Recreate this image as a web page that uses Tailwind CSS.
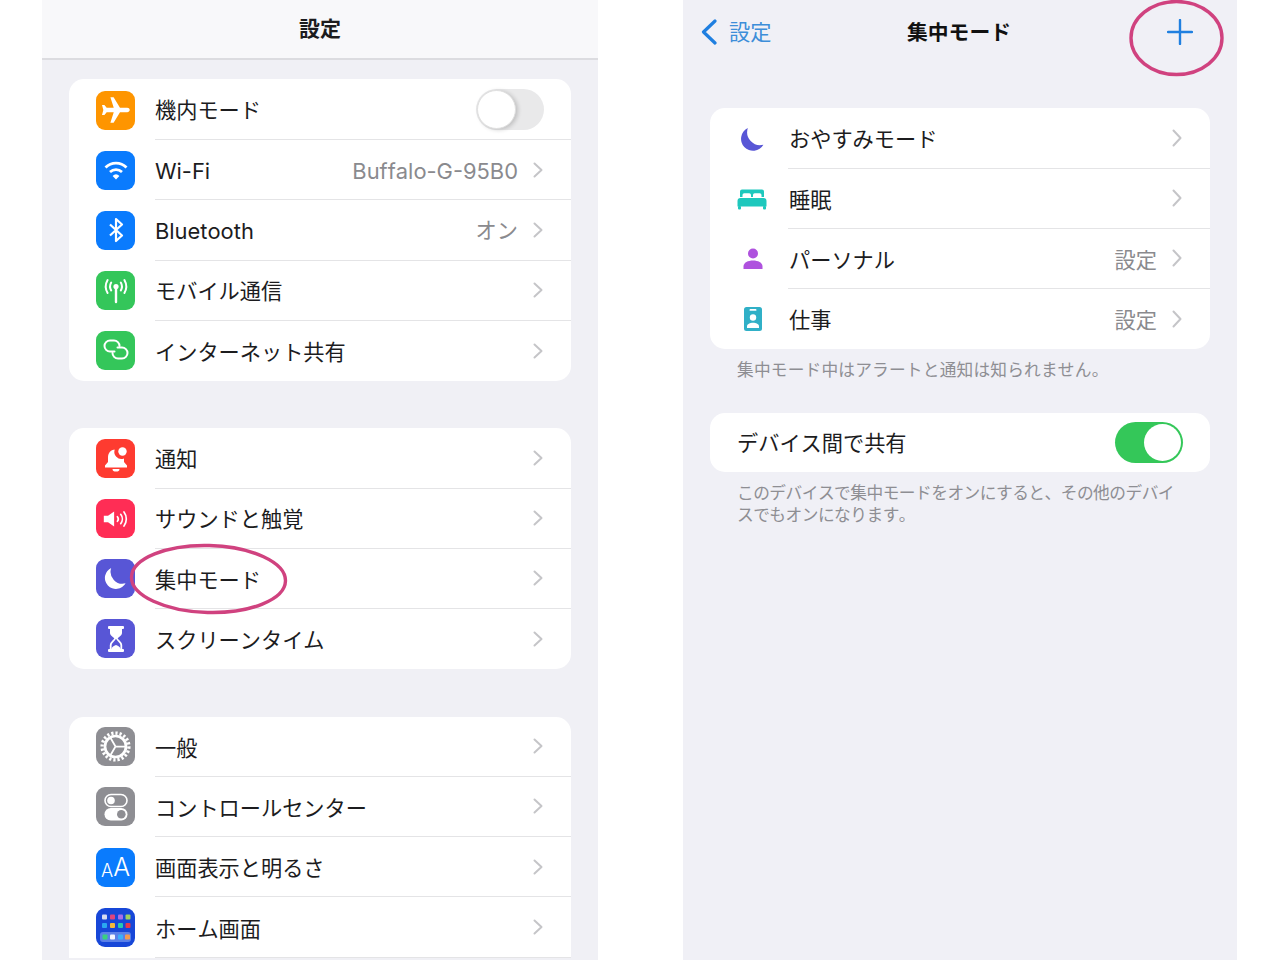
<!DOCTYPE html>
<html lang="ja">
<head>
<meta charset="utf-8">
<title>設定</title>
<script src="https://cdn.jsdelivr.net/npm/@tailwindcss/browser@4"></script>
</head>
<body class="bg-white">
<div class="relative flex w-[1280px] h-[960px] overflow-hidden bg-white text-[21.2px] text-[#1c1c1e] [font-kerning:none] font-[family-name:Inter,'Noto_Sans_CJK_JP',sans-serif]">

  <!-- LEFT PANEL -->
  <section class="ml-[42px] w-[556px] h-full bg-[#f0f0f5] overflow-hidden">
    <header class="flex items-center justify-center h-[60px] bg-[#f8f8fa] border-b-2 border-[#dcdce0] text-[21px] font-bold">設定</header>

    <div class="mx-[27px] mt-[19px] pt-[1px] bg-white rounded-[15px]">
      <div class="flex items-center h-[60.2px] pl-[27px]">
        <div class="flex items-center justify-center w-[39px] h-[39px] rounded-[9px] bg-[#fe9500] shrink-0">
          <svg viewBox="0 0 24 24" class="w-[32px] h-[32px] rotate-90" fill="#fff"><path d="M21.5 16.2v-2.4L13.6 9V3.6c0-.95-.7-1.9-1.6-1.9s-1.6.95-1.6 1.9V9l-7.9 4.8v2.4l7.9-2.5V19l-2.2 1.7v1.8l3.8-1 3.8 1v-1.8L13.6 19v-5.3z"/></svg>
        </div>
        <div class="flex items-center flex-1 h-full ml-[20px] pr-[27px] border-b border-[#e4e4e6]">
          <span class="flex-1 pt-[2px]">機内モード</span>
          <div class="flex justify-start w-[68px] h-[41px] rounded-full bg-[#e9e9ea] p-[1px]"><div class="w-[39px] h-[39px] rounded-full bg-white border border-[#e0e0e0] shadow-[2px_1px_4px_rgba(0,0,0,0.18)]"></div></div>
        </div>
      </div>
      <div class="flex items-center h-[60.2px] pl-[27px]">
        <div class="flex items-center justify-center w-[39px] h-[39px] rounded-[9px] bg-[#0a7bfd] shrink-0">
          <svg viewBox="0 0 28 28" class="w-[28px] h-[28px]" fill="none" stroke="#fff" stroke-width="2.8"><path d="M3.5 11.5a15 15 0 0 1 21 0"/><path d="M8 16a9 9 0 0 1 12 0"/><path d="M14 23.5l-3.4-3.6a5 5 0 0 1 6.8 0z" fill="#fff" stroke="none"/></svg>
        </div>
        <div class="flex items-center flex-1 h-full ml-[20px] pr-[28px] border-b border-[#e4e4e6]">
          <span class="flex-1 pt-[4px] text-[21.9px]">Wi-Fi</span>
          <span class="text-[#8a8a8e] mr-[15px] pt-[4px] text-[21.9px]">Buffalo-G-95B0</span>
          <svg viewBox="0 0 10 16" class="w-[10px] h-[16px]" fill="none" stroke="#c5c5c8" stroke-width="2" stroke-linecap="round" stroke-linejoin="round"><path d="M1.5 1.5L8.5 8l-7 6.5"/></svg>
        </div>
      </div>
      <div class="flex items-center h-[60.2px] pl-[27px]">
        <div class="flex items-center justify-center w-[39px] h-[39px] rounded-[9px] bg-[#0a7bfd] shrink-0">
          <svg viewBox="0 0 24 30" class="w-[24px] h-[30px]" fill="none" stroke="#fff" stroke-width="2.2" stroke-linejoin="round"><path d="M6 9.5l12 11-6 5.5V4l6 5.5-12 11"/></svg>
        </div>
        <div class="flex items-center flex-1 h-full ml-[20px] pr-[28px] border-b border-[#e4e4e6]">
          <span class="flex-1 pt-[2px] text-[21.9px]">Bluetooth</span>
          <span class="text-[#8a8a8e] mr-[15px] pt-[2px]">オン</span>
          <svg viewBox="0 0 10 16" class="w-[10px] h-[16px]" fill="none" stroke="#c5c5c8" stroke-width="2" stroke-linecap="round" stroke-linejoin="round"><path d="M1.5 1.5L8.5 8l-7 6.5"/></svg>
        </div>
      </div>
      <div class="flex items-center h-[60.2px] pl-[27px]">
        <div class="flex items-center justify-center w-[39px] h-[39px] rounded-[9px] bg-[#34c65a] shrink-0">
          <svg viewBox="0 0 32 32" class="w-[32px] h-[32px]" fill="none" stroke="#fff" stroke-width="2" stroke-linecap="round"><circle cx="16" cy="11.5" r="2.6" fill="#fff" stroke="none"/><path d="M16 13v14" stroke-width="2.4"/><path d="M11.2 7.5a8 8 0 0 0 0 8"/><path d="M20.8 7.5a8 8 0 0 1 0 8"/><path d="M7.6 5a13 13 0 0 0 0 13"/><path d="M24.4 5a13 13 0 0 1 0 13"/></svg>
        </div>
        <div class="flex items-center flex-1 h-full ml-[20px] pr-[28px] border-b border-[#e4e4e6]">
          <span class="flex-1 pt-[4px]">モバイル通信</span>
          <svg viewBox="0 0 10 16" class="w-[10px] h-[16px]" fill="none" stroke="#c5c5c8" stroke-width="2" stroke-linecap="round" stroke-linejoin="round"><path d="M1.5 1.5L8.5 8l-7 6.5"/></svg>
        </div>
      </div>
      <div class="flex items-center h-[60.2px] pl-[27px]">
        <div class="flex items-center justify-center w-[39px] h-[39px] rounded-[9px] bg-[#34c65a] shrink-0">
          <svg viewBox="0 0 28 28" class="w-[28px] h-[28px]" fill="none" stroke="#fff" stroke-width="2" stroke-linecap="round"><path d="M12.5 14.5H8a5.500 5.500 0 0 1 0-11h4a5.500 5.500 0 0 1 5.500 5.500"/><path d="M15.500 10.500H20a5.500 5.500 0 0 1 0 11h-4a5.500 5.500 0 0 1-5.500-5.500"/></svg>
        </div>
        <div class="flex items-center flex-1 h-full ml-[20px] pr-[28px]">
          <span class="flex-1 pt-[4px]">インターネット共有</span>
          <svg viewBox="0 0 10 16" class="w-[10px] h-[16px]" fill="none" stroke="#c5c5c8" stroke-width="2" stroke-linecap="round" stroke-linejoin="round"><path d="M1.5 1.5L8.5 8l-7 6.5"/></svg>
        </div>
      </div>
    </div>

    <div class="mx-[27px] mt-[47px] pt-[1px] bg-white rounded-[15px]">
      <div class="flex items-center h-[60px] pl-[27px]">
        <div class="flex items-center justify-center w-[39px] h-[39px] rounded-[9px] bg-[#fe3b30] shrink-0">
          <svg viewBox="0 0 32 32" class="w-[32px] h-[32px]" fill="#fff"><path d="M15 6.5c-4.600.4-7 3.800-7 8v4.500L5 22.600V24.500h22v-1.900l-3-3.600v-3.600a7 7 0 0 1-9-9.400z"/><path d="M12.500 26h7a3.500 2.600 0 0 1-7 0z"/><circle cx="22.500" cy="8.500" r="4.200"/></svg>
        </div>
        <div class="flex items-center flex-1 h-full ml-[20px] pr-[28px] border-b border-[#e4e4e6]">
          <span class="flex-1 pt-[2px]">通知</span>
          <svg viewBox="0 0 10 16" class="w-[10px] h-[16px]" fill="none" stroke="#c5c5c8" stroke-width="2" stroke-linecap="round" stroke-linejoin="round"><path d="M1.5 1.5L8.5 8l-7 6.5"/></svg>
        </div>
      </div>
      <div class="flex items-center h-[60px] pl-[27px]">
        <div class="flex items-center justify-center w-[39px] h-[39px] rounded-[9px] bg-[#ff2d55] shrink-0">
          <svg viewBox="0 0 32 32" class="w-[30px] h-[30px]" fill="none" stroke="#fff" stroke-width="1.8" stroke-linecap="round"><path d="M3 12.500h4.500L14 8v16l-6.500-4.500H3z" fill="#fff" stroke="none"/><path d="M17.500 13.500a4 4 0 0 1 0 5"/><path d="M21 11a8 8 0 0 1 0 10"/><path d="M24.500 8.500a12.500 12.500 0 0 1 0 15"/></svg>
        </div>
        <div class="flex items-center flex-1 h-full ml-[20px] pr-[28px] border-b border-[#e4e4e6]">
          <span class="flex-1 pt-[2px]">サウンドと触覚</span>
          <svg viewBox="0 0 10 16" class="w-[10px] h-[16px]" fill="none" stroke="#c5c5c8" stroke-width="2" stroke-linecap="round" stroke-linejoin="round"><path d="M1.5 1.5L8.5 8l-7 6.5"/></svg>
        </div>
      </div>
      <div class="flex items-center h-[60px] pl-[27px]">
        <div class="flex items-center justify-center w-[39px] h-[39px] rounded-[9px] bg-[#5856d6] shrink-0">
          <svg viewBox="0 0 26 26" class="w-[25px] h-[25px]" fill="#fff"><path d="M8.500 2A11.500 11.500 0 1 0 23.500 18A12.500 12.500 0 0 1 8.500 2z"/></svg>
        </div>
        <div class="flex items-center flex-1 h-full ml-[20px] pr-[28px] border-b border-[#e4e4e6]">
          <span class="flex-1 pt-[4px]">集中モード</span>
          <svg viewBox="0 0 10 16" class="w-[10px] h-[16px]" fill="none" stroke="#c5c5c8" stroke-width="2" stroke-linecap="round" stroke-linejoin="round"><path d="M1.5 1.5L8.5 8l-7 6.5"/></svg>
        </div>
      </div>
      <div class="flex items-center h-[60px] pl-[27px]">
        <div class="flex items-center justify-center w-[39px] h-[39px] rounded-[9px] bg-[#5856d6] shrink-0">
          <svg viewBox="0 0 20 28" class="w-[20px] h-[28px]" fill="#fff"><rect x="2" y="1" width="16" height="3" rx="1"/><rect x="2" y="24" width="16" height="3" rx="1"/><path d="M4 3.500h12v4.500c0 2.800-4.500 4.500-4.500 6h-3c0-1.500-4.500-3.200-4.500-6z"/><path d="M9 13.500c0 1.800-4.300 3.500-4.300 6.500v4.500M11 13.500c0 1.800 4.300 3.500 4.300 6.500v4.500" fill="none" stroke="#fff" stroke-width="1.800"/><path d="M5 24.500c1-3 3.800-4 5-4.500 1.200.5 4 1.500 5 4.500z"/></svg>
        </div>
        <div class="flex items-center flex-1 h-full ml-[20px] pr-[28px]">
          <span class="flex-1 pt-[4px]">スクリーンタイム</span>
          <svg viewBox="0 0 10 16" class="w-[10px] h-[16px]" fill="none" stroke="#c5c5c8" stroke-width="2" stroke-linecap="round" stroke-linejoin="round"><path d="M1.5 1.5L8.5 8l-7 6.5"/></svg>
        </div>
      </div>
    </div>

    <div class="mx-[27px] mt-[48px] bg-white rounded-t-[15px]">
      <div class="flex items-center h-[59.8px] pl-[27px]">
        <div class="flex items-center justify-center w-[39px] h-[39px] rounded-[9px] bg-[#8e8e93] shrink-0">
          <svg viewBox="0 0 36 36" class="w-[35px] h-[35px]" fill="none" stroke="#fff"><circle cx="18" cy="18" r="13.800" stroke-width="3.400" stroke-dasharray="2.300 2"/><circle cx="18" cy="18" r="10.800" stroke-width="2.800"/><path d="M18 18H29M18 18l-5.500-9.500M18 18l-5.500 9.500" stroke-width="1.800"/></svg>
        </div>
        <div class="flex items-center flex-1 h-full ml-[20px] pr-[28px] border-b border-[#e4e4e6]">
          <span class="flex-1 pt-[5px]">一般</span>
          <svg viewBox="0 0 10 16" class="w-[10px] h-[16px]" fill="none" stroke="#c5c5c8" stroke-width="2" stroke-linecap="round" stroke-linejoin="round"><path d="M1.5 1.5L8.5 8l-7 6.5"/></svg>
        </div>
      </div>
      <div class="flex items-center h-[60.3px] pl-[27px]">
        <div class="flex items-center justify-center w-[39px] h-[39px] rounded-[9px] bg-[#8e8e93] shrink-0">
          <svg viewBox="0 0 32 32" class="w-[32px] h-[32px]"><rect x="5" y="3.500" width="22" height="12" rx="6" fill="none" stroke="#fff" stroke-width="1.600"/><circle cx="11" cy="9.500" r="3.800" fill="#fff"/><rect x="4.500" y="17" width="23" height="12.500" rx="6.250" fill="#fff"/><circle cx="21.300" cy="23.200" r="4.300" fill="#8e8e93"/></svg>
        </div>
        <div class="flex items-center flex-1 h-full ml-[20px] pr-[28px] border-b border-[#e4e4e6]">
          <span class="flex-1 pt-[6px]">コントロールセンター</span>
          <svg viewBox="0 0 10 16" class="w-[10px] h-[16px]" fill="none" stroke="#c5c5c8" stroke-width="2" stroke-linecap="round" stroke-linejoin="round"><path d="M1.5 1.5L8.5 8l-7 6.5"/></svg>
        </div>
      </div>
      <div class="flex items-center h-[60.3px] pl-[27px]">
        <div class="flex items-end justify-center w-[39px] h-[39px] pb-[7px] rounded-[9px] bg-[#0a7bfd] shrink-0 text-white leading-none font-light">
          <span class="text-[18px]">A</span><span class="text-[25px]">A</span>
        </div>
        <div class="flex items-center flex-1 h-full ml-[20px] pr-[28px] border-b border-[#e4e4e6]">
          <span class="flex-1 pt-[4px]">画面表示と明るさ</span>
          <svg viewBox="0 0 10 16" class="w-[10px] h-[16px]" fill="none" stroke="#c5c5c8" stroke-width="2" stroke-linecap="round" stroke-linejoin="round"><path d="M1.5 1.5L8.5 8l-7 6.5"/></svg>
        </div>
      </div>
      <div class="flex items-center h-[60.3px] pl-[27px]">
        <div class="flex items-center justify-center w-[39px] h-[39px] rounded-[9px] bg-[#1747d8] shrink-0">
          <svg viewBox="0 0 39 39" class="w-[39px] h-[39px]"><rect x="6" y="6.500" width="5" height="5" rx="1" fill="#d8dcf0"/><rect x="14" y="6.500" width="5" height="5" rx="1" fill="#e0447e"/><rect x="22" y="6.500" width="5" height="5" rx="1" fill="#a86ee8"/><rect x="29.500" y="6.500" width="5" height="5" rx="1" fill="#9fd060"/><rect x="6" y="15" width="5" height="5" rx="1" fill="#2aa8f0"/><rect x="14" y="15" width="5" height="5" rx="1" fill="#f4b93c"/><rect x="22" y="15" width="5" height="5" rx="1" fill="#28c8b0"/><rect x="29.500" y="15" width="5" height="5" rx="1" fill="#e8384c"/><rect x="4" y="24" width="31" height="10" rx="3" fill="#5a80e8"/><rect x="6.500" y="26.500" width="5" height="5" rx="1" fill="#38d080"/><rect x="14" y="26.500" width="5" height="5" rx="1" fill="#f4f6ff"/><rect x="22" y="26.500" width="5" height="5" rx="1" fill="#3cb0f8"/><rect x="29" y="26.500" width="5" height="5" rx="1" fill="#f49a50"/></svg>
        </div>
        <div class="flex items-center flex-1 h-full ml-[20px] pr-[28px] border-b border-[#e4e4e6]">
          <span class="flex-1 pt-[6px]">ホーム画面</span>
          <svg viewBox="0 0 10 16" class="w-[10px] h-[16px]" fill="none" stroke="#c5c5c8" stroke-width="2" stroke-linecap="round" stroke-linejoin="round"><path d="M1.5 1.5L8.5 8l-7 6.5"/></svg>
        </div>
      </div>
    </div>
  </section>

  <!-- RIGHT PANEL -->
  <section class="ml-[85px] w-[554px] h-full bg-[#f0f0f6] overflow-hidden">
    <header class="grid grid-cols-[1fr_auto_1fr] items-center h-[64px] pl-[18px] pr-[20px]">
      <div class="flex items-center text-[#3d8ed9]">
        <svg viewBox="0 0 16 26" class="w-[16px] h-[26px]" fill="none" stroke="#1f7fe0" stroke-width="3.2" stroke-linecap="round" stroke-linejoin="round"><path d="M14 2L2.500 13 14 24"/></svg>
        <span class="ml-[12px] pt-[1px]">設定</span>
      </div>
      <div class="font-bold text-[20.8px] text-[#111] pt-[2px]">集中モード</div>
      <div class="flex justify-end pr-[24px]">
        <svg viewBox="0 0 26 26" class="w-[26px] h-[26px]" fill="none" stroke="#1f7fe0" stroke-width="2.400" stroke-linecap="round"><path d="M13 1v24M1 13h24"/></svg>
      </div>
    </header>

    <div class="mx-[27px] mt-[44px] pt-[1px] bg-white rounded-[15px]">
      <div class="flex items-center h-[60px] pl-[21px]">
        <div class="flex items-center justify-center w-[42px] h-[42px] shrink-0">
          <svg viewBox="0 0 26 26" class="w-[27px] h-[27px]" fill="#5856d6"><path d="M8.500 2A11.500 11.500 0 1 0 23.500 18A12.500 12.500 0 0 1 8.500 2z"/></svg>
        </div>
        <div class="flex items-center flex-1 h-full ml-[15px] pr-[28px] border-b border-[#e4e4e6]">
          <span class="flex-1 pl-[1px] pt-[2px]">おやすみモード</span>
          <svg viewBox="0 0 10 18" class="w-[10px] h-[18px] mb-[1px]" fill="none" stroke="#c5c5c8" stroke-width="2" stroke-linecap="round" stroke-linejoin="round"><path d="M1.500 1.500L8.500 9l-7 7.500"/></svg>
        </div>
      </div>
      <div class="flex items-center h-[60px] pl-[21px]">
        <div class="flex items-center justify-center w-[42px] h-[42px] shrink-0">
          <svg viewBox="0 0 30 22" class="w-[30px] h-[22px]" fill="#1ec8bd"><path d="M3 9V3.500A2 2 0 0 1 5 1.500h20a2 2 0 0 1 2 2V9h-2.500V7a1.800 1.800 0 0 0-1.800-1.800h-5A1.800 1.800 0 0 0 16 7v2h-2V7a1.800 1.800 0 0 0-1.800-1.800h-5A1.800 1.800 0 0 0 5.500 7v2z"/><path d="M3.500 10h23a3 3 0 0 1 3 3v5.500h-29V13a3 3 0 0 1 3-3z"/><rect x="1" y="18" width="3" height="3.500" rx="1"/><rect x="26" y="18" width="3" height="3.500" rx="1"/></svg>
        </div>
        <div class="flex items-center flex-1 h-full ml-[15px] pr-[28px] border-b border-[#e4e4e6]">
          <span class="flex-1 pl-[1px] pt-[4px]">睡眠</span>
          <svg viewBox="0 0 10 18" class="w-[10px] h-[18px] mb-[1px]" fill="none" stroke="#c5c5c8" stroke-width="2" stroke-linecap="round" stroke-linejoin="round"><path d="M1.500 1.500L8.500 9l-7 7.500"/></svg>
        </div>
      </div>
      <div class="flex items-center h-[60px] pl-[22px]">
        <div class="flex items-center justify-center w-[42px] h-[42px] shrink-0">
          <svg viewBox="0 0 20 22" class="w-[20px] h-[22px]" fill="#af52de"><circle cx="10" cy="5.500" r="5"/><path d="M0.500 21v-2.500C.5 14.500 5 12.500 10 12.500s9.500 2 9.500 6V21z"/></svg>
        </div>
        <div class="flex items-center flex-1 h-full ml-[14px] pr-[28px] border-b border-[#e4e4e6]">
          <span class="flex-1 pl-[1px] pt-[4px]">パーソナル</span>
          <span class="text-[#8a8a8e] mr-[15px] pt-[4px]">設定</span>
          <svg viewBox="0 0 10 18" class="w-[10px] h-[18px] mb-[1px]" fill="none" stroke="#c5c5c8" stroke-width="2" stroke-linecap="round" stroke-linejoin="round"><path d="M1.500 1.500L8.500 9l-7 7.500"/></svg>
        </div>
      </div>
      <div class="flex items-center h-[60px] pl-[22px]">
        <div class="flex items-center justify-center w-[42px] h-[42px] shrink-0">
          <svg viewBox="0 0 18 24" class="w-[18px] h-[24px]"><rect x="0" y="0" width="18" height="24" rx="2.500" fill="#30b0c7"/><rect x="5.500" y="2" width="7" height="1.800" rx=".9" fill="#fff"/><circle cx="9" cy="10.500" r="3.200" fill="#fff"/><path d="M3 21v-1.500c0-2.500 3-3.700 6-3.700s6 1.200 6 3.700V21z" fill="#fff"/></svg>
        </div>
        <div class="flex items-center flex-1 h-full ml-[14px] pr-[28px]">
          <span class="flex-1 pl-[1px] pt-[4px]">仕事</span>
          <span class="text-[#8a8a8e] mr-[15px] pt-[4px]">設定</span>
          <svg viewBox="0 0 10 18" class="w-[10px] h-[18px] mb-[1px]" fill="none" stroke="#c5c5c8" stroke-width="2" stroke-linecap="round" stroke-linejoin="round"><path d="M1.500 1.500L8.500 9l-7 7.500"/></svg>
        </div>
      </div>
    </div>

    <p class="mx-[54px] mt-[10px] text-[16.7px] leading-[22px] tracking-[0.2px] text-[#8e8e93]">集中モード中はアラートと通知は知られません。</p>

    <div class="flex items-center justify-between mx-[27px] mt-[32px] h-[59px] pl-[27px] pr-[27px] bg-white rounded-[15px]">
      <span class="pt-[2px]">デバイス間で共有</span>
      <div class="flex justify-end w-[68px] h-[41px] rounded-full bg-[#34c759] p-[2px]"><div class="w-[37px] h-[37px] rounded-full bg-white"></div></div>
    </div>

    <p class="ml-[54px] mt-[10px] text-[16.7px] leading-[22px] tracking-[-0.5px] whitespace-nowrap text-[#8e8e93]">このデバイスで集中モードをオンにすると、その他のデバイ<br>スでもオンになります。</p>
  </section>

  <!-- Annotation ovals -->
  <svg class="absolute inset-0 w-[1280px] h-[960px] pointer-events-none" viewBox="0 0 1280 960" fill="none" stroke="#d0427f" stroke-width="3.400">
    <ellipse cx="208.500" cy="579" rx="77" ry="33.500" transform="rotate(1.500 208.500 579)"/>
    <ellipse cx="1176.500" cy="38" rx="45.500" ry="36.500"/>
  </svg>
</div>
</body>
</html>
